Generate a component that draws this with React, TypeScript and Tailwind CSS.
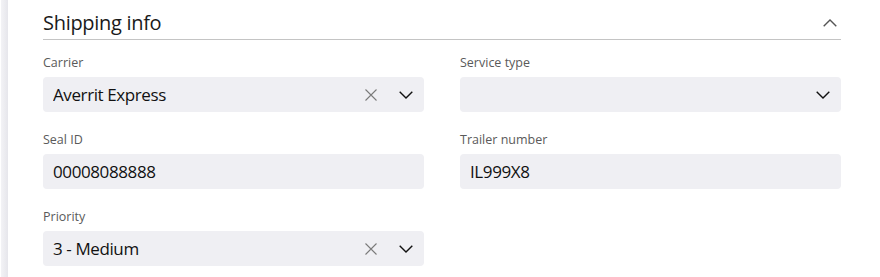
interface FieldProps {
  label: string;
  value?: string;
  clearable?: boolean;
  select?: boolean;
}

function ClearIcon() {
  return (
    <svg width="12" height="12" viewBox="0 0 12 12" className="mr-[22px]" fill="none">
      <path d="M0.5 0.5 L11.5 11.5 M11.5 0.5 L0.5 11.5" stroke="#7a7a7a" strokeWidth="1.1" />
    </svg>
  );
}

function Chevron({ up }: { up?: boolean }) {
  return (
    <svg width="14" height="8" viewBox="0 0 14 8" fill="none">
      <path
        d={up ? 'M0.7 7.3 L7 1 L13.3 7.3' : 'M0.7 0.7 L7 7 L13.3 0.7'}
        stroke={up ? '#555' : '#111'}
        strokeWidth="1.4"
      />
    </svg>
  );
}

function Field({ label, value, clearable, select }: FieldProps) {
  return (
    <div className="flex flex-col">
      <label className="text-[12.5px] leading-[18px] text-[#5a5a5a]">{label}</label>
      <div className="mt-[5px] flex h-[35px] items-center rounded-[4px] bg-[#efeff3] pl-[10px] pr-[11px]">
        <span className="flex-1 truncate text-[17px] leading-[35px] tracking-[-0.4px] text-[#111]">{value}</span>
        {clearable && <ClearIcon />}
        {select && <Chevron />}
      </div>
    </div>
  );
}

export default function App() {
  return (
    <div className="flex h-[277px] w-[880px] bg-white" style={{ fontFamily: '"Open Sans", "Noto Sans", sans-serif' }}>
      {/* left panel edge */}
      <div className="ml-px w-[7px] bg-gradient-to-r from-[#f3f3f6] to-[#e6e6eb]" />

      <div className="flex-1 pl-[35px] pr-[39px]">
        {/* Section header */}
        <div className="flex items-center justify-between border-b border-[#c4c4c4] pt-[9px] pb-[2px]">
          <h2 className="text-[20px] leading-[28px] tracking-[-0.3px] text-[#1a1a1a]">Shipping info</h2>
          <div className="mr-[4px]">
            <Chevron up />
          </div>
        </div>

        <div className="mt-[14px] grid grid-cols-2 gap-x-[36px] gap-y-[19px]">
          <Field label="Carrier" value="Averrit Express" clearable select />
          <Field label="Service type" select />
          <Field label="Seal ID" value="00008088888" />
          <Field label="Trailer number" value="IL999X8" />
          <Field label="Priority" value="3 - Medium" clearable select />
        </div>
      </div>
    </div>
  );
}
